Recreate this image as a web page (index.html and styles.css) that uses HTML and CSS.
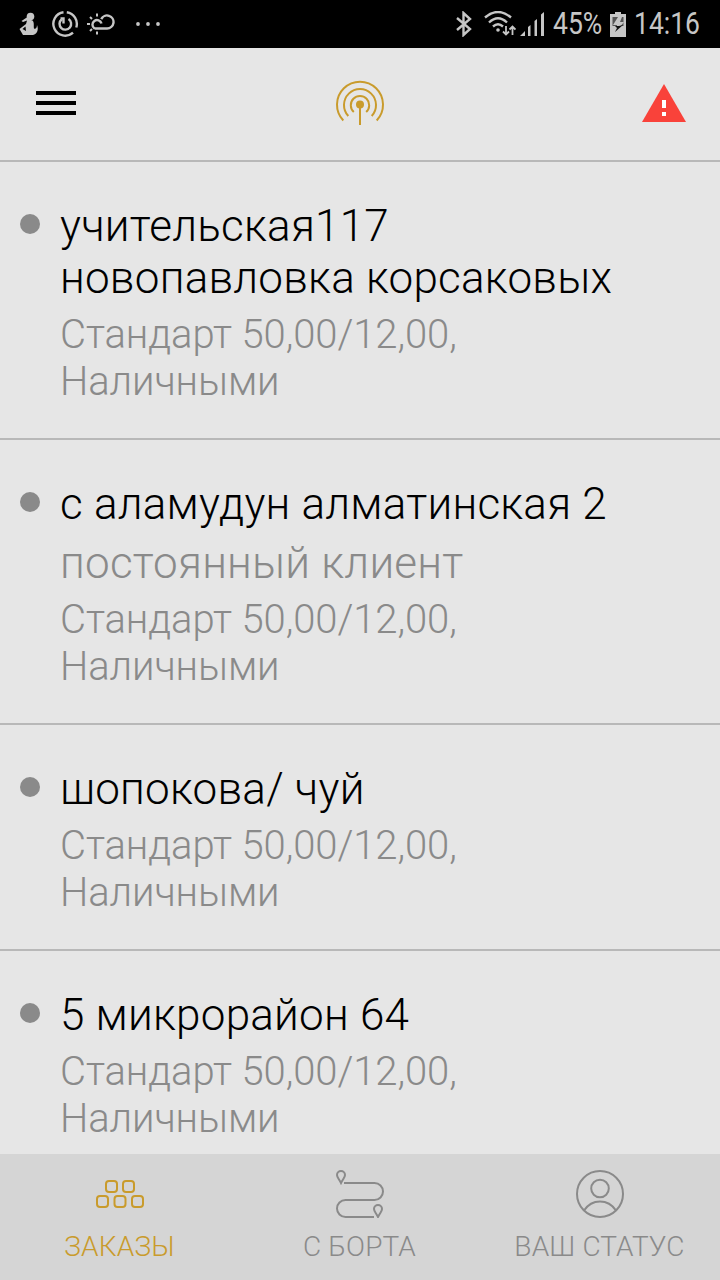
FILE: index.html
```html
<!DOCTYPE html>
<html lang="ru">
  <head>
    <meta charset="UTF-8" />
    <meta name="viewport" content="width=device-width, initial-scale=1.0" />
    <title>Заказы</title>
    <link rel="stylesheet" href="styles.css">
  </head>
  <body>
    <div class="status-bar">
      <div class="status-left">
        <svg class="icon-person" width="20" height="24" viewBox="0 0 20 24">
          <circle cx="11.500" cy="4.500" r="3.800" />
          <path d="M2.500 9l6-4 2 2.500 3 1c2 2 1 5 1.500 8 1.500 1 3-.5 3-3.500 2 5 0 9-4 10H4l-3.500-6L7 12l1-3.500-4 1.500z" />
          <path class="cut" d="M3.500 17l3-2.500.5 4.500" />
        </svg>
        <svg class="icon-power" width="28" height="28" viewBox="0 0 28 28">
          <path d="M12.500 2.200A11.800 11.800 0 1 0 22 22.700M25.300 17.500A11.800 11.800 0 0 0 15.800 2.300" />
          <path d="M9.500 8.500h3v5M10.500 9.500a5.800 5.800 0 1 0 7-.5" />
        </svg>
        <svg class="icon-weather" width="28" height="24" viewBox="0 0 28 24">
          <path d="M7.500 16.500a4.600 4.600 0 1 1 7-5M7.500 16.500H20a6.500 6.500 0 1 0-5.800-9.400" />
          <path class="rays" d="M0 12h3M3 5l2 2M10 1.500v3M3 19l2-2M10 19.500v3" />
        </svg>
        <svg class="icon-dots" width="26" height="4" viewBox="0 0 26 4">
          <circle cx="3" cy="2" r="1.900" />
          <circle cx="13" cy="2" r="1.900" />
          <circle cx="23" cy="2" r="1.900" />
        </svg>
      </div>
      <div class="status-right">
        <svg class="icon-bluetooth" width="18" height="26" viewBox="0 0 18 26">
          <path d="M2 7l13 11-6.500 6V2L15 8 2 19" />
        </svg>
        <svg class="icon-wifi" width="32" height="26" viewBox="0 0 32 26">
          <path d="M1 6.500Q14-4.500 27 6.500M5 11.500Q14 3 23 11.500M9 15.500q5-4.500 10 0" />
          <circle cx="14" cy="19" r="1.800" />
          <path class="arrows" d="M22 15v8.500M19 20.500l3 3 3-3M28.500 24v-8.500M25.500 18.500l3-3 3 3" />
        </svg>
        <svg class="icon-signal" width="24" height="24" viewBox="0 0 24 24">
          <path d="M0 24l5-5v5zM8 15l2.500-2v11H8zM14.500 9l2.500-2v17h-2.500zM21 2.500L24 0v24h-3z" />
        </svg>
        <span class="battery-level">45%</span>
        <svg class="icon-battery" width="16" height="25" viewBox="0 0 16 25">
          <path d="M5 0h6v2h5v23H0V2h5z" />
          <path class="level" d="M2.500 5h11v9h-11z" />
          <path d="M8 5h4l-2 5h4L6 20l1-7H3z" />
          <path class="bolt" d="M5 14h4l4-1-8 7 2-4z" />
        </svg>
        <span class="clock">14:16</span>
      </div>
    </div>

    <header class="header">
      <button class="menu-btn" aria-label="Меню">
        <span></span>
        <span></span>
        <span></span>
      </button>
      <svg class="icon-radio" width="50" height="46" viewBox="0 0 50 46">
        <path d="M8.300 40.500A23 23 0 1 1 41.700 40.500M13.300 36A16 16 0 1 1 36.700 36M18.800 32A9.200 9.200 0 1 1 31.200 32" />
        <path d="M25 25v20" />
        <circle cx="25" cy="24.500" r="4" />
      </svg>
      <svg class="icon-alert" width="44" height="38" viewBox="0 0 44 38">
        <path class="triangle" d="M22 0l22 38H0z" />
        <path class="mark" d="M20 16h4v8h-4zM20 28h4v4h-4z" />
      </svg>
    </header>

    <main class="orders">
      <div class="order">
        <span class="order-dot"></span>
        <div class="order-body">
          <div class="order-address">учительская117<br>новопавловка корсаковых</div>
          <div class="order-info">Стандарт 50,00/12,00,<br>Наличными</div>
        </div>
      </div>
      <div class="order">
        <span class="order-dot"></span>
        <div class="order-body">
          <div class="order-address">с аламудун алматинская 2</div>
          <div class="order-client">постоянный клиент</div>
          <div class="order-info">Стандарт 50,00/12,00,<br>Наличными</div>
        </div>
      </div>
      <div class="order">
        <span class="order-dot"></span>
        <div class="order-body">
          <div class="order-address">шопокова/ чуй</div>
          <div class="order-info">Стандарт 50,00/12,00,<br>Наличными</div>
        </div>
      </div>
      <div class="order">
        <span class="order-dot"></span>
        <div class="order-body">
          <div class="order-address">5 микрорайон 64</div>
          <div class="order-info">Стандарт 50,00/12,00,<br>Наличными</div>
        </div>
      </div>
    </main>

    <nav class="tabs">
      <a class="tab active">
        <svg width="48" height="48" viewBox="0 0 48 48">
          <rect x="10" y="11" width="11" height="11" rx="3" />
          <rect x="27" y="11" width="11" height="11" rx="3" />
          <rect x="1" y="26" width="11" height="11" rx="3" />
          <rect x="18.500" y="26" width="11" height="11" rx="3" />
          <rect x="36" y="26" width="11" height="11" rx="3" />
        </svg>
        <span>ЗАКАЗЫ</span>
      </a>
      <a class="tab">
        <svg width="48" height="48" viewBox="0 0 48 48">
          <path d="M8 13h30.500a8.500 8.500 0 0 1 0 17H9.500a8.500 8.500 0 0 0 0 17H38" />
          <path d="M5 13C3 9 1 7.500 1 5a4 4 0 0 1 8 0c0 2.500-2 4-4 8zM42 47c-2-4-4-5.500-4-8a4 4 0 0 1 8 0c0 2.500-2 4-4 8z" />
        </svg>
        <span>С БОРТА</span>
      </a>
      <a class="tab">
        <svg width="48" height="48" viewBox="0 0 48 48">
          <circle cx="24" cy="24" r="23" />
          <circle cx="24" cy="18.500" r="8.800" />
          <path d="M8 40.500c8-12 24-12 32 0" />
        </svg>
        <span>ВАШ СТАТУС</span>
      </a>
    </nav>
  </body>
</html>
```
FILE: styles.css
```css
:root {
  --bg-color: #e6e6e6;
  --bar-color: #d5d5d5;
  --line-color: #b8b8b8;
  --muted-color: #8a8a8a;
  --accent-color: #c99b2c;
  --alert-color: #f9423a;
  --status-color: #c6c6c6;
}

* {
  box-sizing: border-box;
}

body {
  margin: 0;
  height: 1280px;
  display: flex;
  flex-direction: column;
  overflow: hidden;
  font-family: Roboto, "Noto Sans", sans-serif;
  font-weight: 300;
  color: #000;
  background-color: var(--bg-color);
}

svg {
  display: block;
  flex-shrink: 0;
  fill: none;
  stroke-width: 2;
}

/* Status bar */
.status-bar {
  height: 48px;
  flex-shrink: 0;
  display: flex;
  justify-content: space-between;
  align-items: center;
  padding: 0 20px 0 19px;
  background-color: #000;
  color: var(--status-color);
}

.status-left,
.status-right {
  display: flex;
  align-items: center;
}

.icon-person,
.icon-dots,
.icon-signal,
.icon-battery {
  fill: var(--status-color);
}

.icon-person .cut {
  fill: #000;
}

.icon-power,
.icon-weather,
.icon-bluetooth,
.icon-wifi {
  stroke: var(--status-color);
  stroke-width: 2.4;
}

.icon-power {
  margin-left: 12px;
}

.icon-weather {
  margin-left: 8px;
}

.icon-weather .rays {
  stroke-width: 2;
}

.icon-dots {
  margin-left: 20px;
}

.icon-wifi {
  margin-left: 11px;
}

.icon-wifi circle {
  fill: var(--status-color);
  stroke: none;
}

.icon-wifi .arrows {
  stroke-width: 1.8;
}

.icon-signal {
  margin-left: 4px;
}

.icon-battery .level {
  fill: #555;
}

.icon-battery .bolt {
  fill: #111;
}

.battery-level,
.clock {
  font-size: 31px;
  font-weight: 400;
  line-height: 50px;
  transform: scaleX(0.855);
  transform-origin: left;
  white-space: nowrap;
}

.battery-level {
  width: 49px;
  margin: 0 8px 0 9px;
}

.clock {
  width: 66px;
  margin-left: 8px;
}

/* Header */
.header {
  height: 114px;
  flex-shrink: 0;
  display: grid;
  grid-template-columns: 1fr auto 1fr;
  align-items: center;
  padding: 0 34px 2px 36px;
  border-bottom: 2px solid var(--line-color);
}

.menu-btn {
  display: flex;
  flex-direction: column;
  gap: 6px;
  width: 40px;
  padding: 0;
  border: none;
  background: none;
}

.menu-btn span {
  height: 4px;
  background-color: #000;
}

.icon-radio {
  margin: 0 2px 0 0;
  stroke: var(--accent-color);
}

.icon-radio circle {
  fill: var(--accent-color);
  stroke: none;
}

.icon-alert {
  justify-self: end;
}

.icon-alert .triangle {
  fill: var(--alert-color);
}

.icon-alert .mark {
  fill: #fff;
}

/* Orders */
.orders {
  flex: 1;
  min-height: 0;
  overflow: hidden;
}

.order {
  display: flex;
  padding: 38px 20px 33px;
  border-bottom: 2px solid var(--line-color);
}

.order-dot {
  width: 20px;
  height: 20px;
  flex-shrink: 0;
  margin: 14px 20px 0 0;
  border-radius: 50%;
  background-color: var(--muted-color);
}

.order-address,
.order-client {
  font-size: 44px;
  line-height: 52px;
  letter-spacing: 0.24px;
}

.order-client {
  margin-top: 7px;
  color: var(--muted-color);
}

.order-info {
  margin-top: 7px;
  font-size: 40px;
  line-height: 47px;
  letter-spacing: -0.1px;
  color: var(--muted-color);
}

/* Tabs */
.tabs {
  height: 126px;
  flex-shrink: 0;
  display: grid;
  grid-template-columns: repeat(3, 1fr);
  background-color: var(--bar-color);
}

.tab {
  display: flex;
  flex-direction: column;
  align-items: center;
  gap: 12px;
  padding-top: 16px;
  font-size: 28px;
  line-height: 33px;
  letter-spacing: 0.15px;
  color: var(--muted-color);
}

.tab span {
  margin-left: -1px;
}

.tab svg {
  stroke: currentColor;
}

.tab.active {
  color: var(--accent-color);
}
```
